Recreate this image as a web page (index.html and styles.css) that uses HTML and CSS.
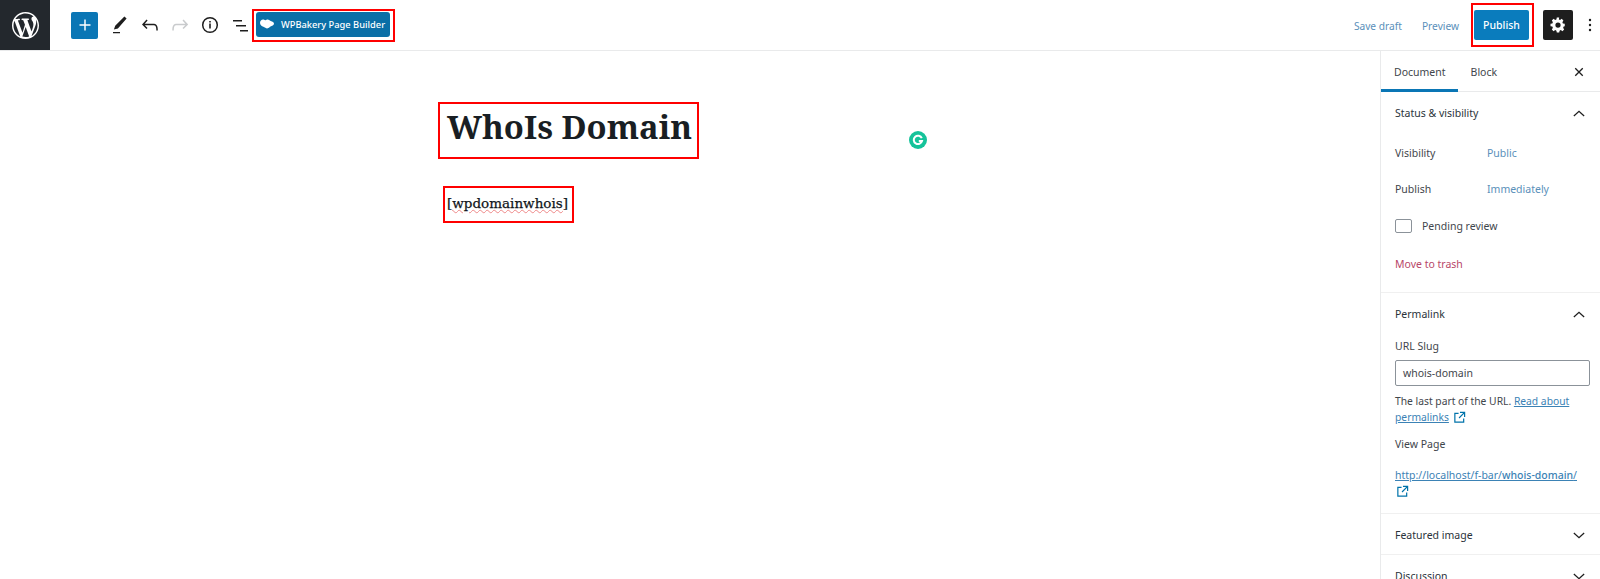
FILE: index.html
```html
<!DOCTYPE html>
<html lang="en">
<head>
<meta charset="utf-8">
<title>WhoIs Domain</title>
<link rel="stylesheet" href="styles.css">
</head>
<body>
<header class="topbar">
  <div class="wp-logo">
    <svg viewBox="0 0 20 20" width="27" height="27"><path fill="#fff" d="M20 10c0-5.510-4.490-10-10-10C4.480 0 0 4.490 0 10c0 5.520 4.480 10 10 10 5.510 0 10-4.480 10-10zM7.780 15.370L4.370 6.220c.55-.02 1.170-.08 1.170-.08.5-.06.44-1.130-.06-1.110 0 0-1.450.11-2.370.11-.18 0-.37 0-.58-.01C4.120 2.690 6.890 1.030 10 1.030c2.330 0 4.450.87 6.050 2.340-.68-.11-1.650.39-1.650 1.580 0 .74.45 1.360.9 2.100.35.61.55 1.360.55 2.460 0 1.490-1.400 5-1.400 5l-3.030-8.370c.54-.02.82-.17.82-.17.5-.05.44-1.250-.06-1.220 0 0-1.440.12-2.380.12-.87 0-2.330-.12-2.330-.12-.5-.03-.56 1.200-.06 1.220l.92.08 1.260 3.410zM17.410 10c.24-.64.74-1.870.43-4.250.7 1.290 1.050 2.710 1.050 4.250 0 3.290-1.730 6.240-4.400 7.780.97-2.590 1.940-5.200 2.920-7.780zM6.100 18.090C3.120 16.650 1.110 13.530 1.110 10c0-1.300.23-2.480.72-3.580zm4.030-6.960l2.580 6.980c-.86.29-1.730.46-2.710.46-.78 0-1.580-.12-2.320-.36z"/></svg>
  </div>
  <div class="tools">
    <button class="add" type="button" aria-label="Add block">
      <svg viewBox="0 0 24 24" width="22" height="22"><path fill="#fff" d="M18 11.200h-5.200V6h-1.600v5.200H6v1.600h5.200V18h1.600v-5.200H18z"/></svg>
    </button>
    <svg class="pen" viewBox="0 0 24 24" width="24" height="24"><path fill="#1e1e1e" d="M18.600 5.600L16.400 3.500 7.200 12.700l-1.300 3.900 4-1.200L18.600 5.600zM5 20.300h7v-1.400H5v1.400z"/></svg>
    <svg class="undo" viewBox="0 0 24 24" width="24" height="24"><path fill="#1e1e1e" d="M18.300 11.700c-.6-.6-1.400-.9-2.300-.9H6.700l2.900-3.300-1.100-1-4.500 5L8.500 16l1-1-2.700-2.700H16c.5 0 .9.200 1.300.5 1 1 1 3.400 1 4.500v.3h1.500v-.200c0-1.500 0-4.300-1.500-5.700z"/></svg>
    <svg class="redo" viewBox="0 0 24 24" width="24" height="24"><path fill="#c9cbcd" d="M15.600 6.500l-1.100 1 2.900 3.300H8c-.9 0-1.700.3-2.300.9-1.400 1.500-1.400 4.200-1.400 5.600v.2h1.500v-.3c0-1.100 0-3.500 1-4.500.3-.3.700-.5 1.300-.5h9.200L14.500 15l1.100 1.100 4.600-4.600-4.600-5z"/></svg>
    <svg class="info" viewBox="0 0 24 24" width="24" height="24"><circle cx="12" cy="12" r="7.300" fill="none" stroke="#1e1e1e" stroke-width="1.500"/><path fill="#1e1e1e" d="M11.200 10.500h1.600v5h-1.600zM11.200 8h1.600v1.600h-1.600z"/></svg>
    <svg class="outline" viewBox="0 0 24 24" width="24" height="24"><path fill="#1e1e1e" d="M4 7h9v1.500H4zM7 12h10v1.500H7zM11 17h8v1.500h-8z"/></svg>
    <div class="mark mark-builder">
      <a class="builder" href="#">
        <svg viewBox="0 0 14 10" width="14" height="10"><path fill="#fff" d="M0 4C0 1.800 1.500.4 3 .4c1 0 1.500.6 2.200.8C6 1.400 6.700.6 7.800.6c1 0 1.500.8 2.400 1.200C11.500 2.300 14 2.700 14 4.600c0 1.900-2.200 2.300-3.500 3-1 .6-1.800 1.800-3.300 1.800-1.500 0-2.200-1-3.200-1.400C2.500 7.500 0 6.500 0 4z"/></svg>
        <span>WPBakery Page Builder</span>
      </a>
    </div>
  </div>
  <div class="actions">
    <a class="link save" href="#">Save draft</a>
    <a class="link preview" href="#">Preview</a>
    <div class="mark mark-publish"><button class="publish" type="button">Publish</button></div>
    <button class="gear" type="button" aria-label="Settings">
      <svg viewBox="0 0 24 24" width="18" height="18"><path fill="#fff" fill-rule="evenodd" d="M21 13.600v-3.200l-2.500-.5c-.2-.6-.4-1.200-.7-1.700l1.400-2.100-2.300-2.300-2.100 1.400c-.5-.3-1.100-.5-1.700-.7L13.600 2h-3.200l-.5 2.500c-.6.2-1.200.4-1.700.7L6.100 3.800 3.800 6.100l1.400 2.100c-.3.5-.5 1.100-.7 1.700L2 10.400v3.200l2.500.5c.2.600.4 1.200.7 1.700l-1.400 2.100 2.300 2.300 2.100-1.400c.5.3 1.100.5 1.700.7l.5 2.500h3.200l.5-2.500c.6-.2 1.200-.4 1.700-.7l2.100 1.400 2.300-2.300-1.400-2.100c.3-.5.5-1.100.7-1.700zM12 15.500a3.500 3.500 0 1 1 0-7 3.500 3.500 0 0 1 0 7z"/></svg>
    </button>
    <svg class="dots" viewBox="0 0 4 16" width="4" height="16"><circle cx="2" cy="3" r="1.200" fill="#1e1e1e"/><circle cx="2" cy="8" r="1.200" fill="#1e1e1e"/><circle cx="2" cy="13" r="1.200" fill="#1e1e1e"/></svg>
  </div>
</header>
<div class="main">
  <main class="editor">
    <div class="column">
      <h1 class="post-title">WhoIs Domain</h1>
      <p class="shortcode"><span class="squiggle">[wpdomainwhois]</span></p>
    </div>
    <span class="grammarly"><svg viewBox="0 0 18 18" width="18" height="18"><circle cx="9" cy="9" r="9" fill="#15c39a"/><path fill="none" stroke="#fff" stroke-width="2" d="M12.800 7.200A4.200 4.200 0 1 0 13 10H9.800"/></svg></span>
  </main>
  <aside class="sidebar">
    <div class="tabs">
      <span class="tab active">Document</span>
      <span class="tab">Block</span>
      <svg class="close" viewBox="0 0 12 12" width="10" height="10"><path stroke="#1e1e1e" stroke-width="1.600" d="M1.500 1.500l9 9M10.500 1.500l-9 9"/></svg>
    </div>
    <section class="panel status">
      <div class="panel-head"><span>Status &amp; visibility</span><svg class="chev" viewBox="0 0 14 8" width="12" height="7"><path fill="none" stroke="#1e1e1e" stroke-width="1.500" d="M1 7l6-5.500L13 7"/></svg></div>
      <div class="row row-vis"><span class="row-label">Visibility</span><a class="link" href="#">Public</a></div>
      <div class="row row-pub"><span class="row-label">Publish</span><a class="link" href="#">Immediately</a></div>
      <label class="pending"><span class="check"></span><span>Pending review</span></label>
      <a class="trash" href="#">Move to trash</a>
    </section>
    <section class="panel permalink">
      <div class="panel-head"><span>Permalink</span><svg class="chev" viewBox="0 0 14 8" width="12" height="7"><path fill="none" stroke="#1e1e1e" stroke-width="1.500" d="M1 7l6-5.500L13 7"/></svg></div>
      <div class="slug-label">URL Slug</div>
      <div class="slug-input">whois-domain</div>
      <p class="help">The last part of the URL. <a href="#">Read about permalinks</a> <svg class="ext" viewBox="0 0 14 14" width="13" height="13"><path fill="none" stroke="#0073aa" stroke-width="1.300" d="M6 2.500H2v9.500h9.500V8M7.500 1.500h5v5M12.500 1.500L6.500 7.500"/></svg></p>
      <div class="view-label">View Page</div>
      <p class="view-link"><a href="#">http://localhost/f-bar/<b>whois-domain</b>/</a> <svg class="ext" viewBox="0 0 14 14" width="13" height="13"><path fill="none" stroke="#0073aa" stroke-width="1.300" d="M6 2.500H2v9.500h9.500V8M7.500 1.500h5v5M12.500 1.500L6.500 7.500"/></svg></p>
    </section>
    <section class="panel closed">
      <div class="panel-head"><span>Featured image</span><svg class="chev" viewBox="0 0 14 8" width="12" height="7"><path fill="none" stroke="#1e1e1e" stroke-width="1.500" d="M1 1l6 5.500L13 1"/></svg></div>
    </section>
    <section class="panel closed">
      <div class="panel-head"><span>Discussion</span><svg class="chev" viewBox="0 0 14 8" width="12" height="7"><path fill="none" stroke="#1e1e1e" stroke-width="1.500" d="M1 1l6 5.500L13 1"/></svg></div>
    </section>
  </aside>
</div>
</body>
</html>
```

FILE: styles.css
```css
* { box-sizing: border-box; }
html, body { margin: 0; height: 100%; overflow: hidden; background: #fff; }
body { font-family: "Noto Sans", "Open Sans", sans-serif; font-size: 10.5px; color: #3f464c; }
a { text-decoration: none; }
button { border: 0; padding: 0; font: inherit; }
svg { display: block; flex: none; }

.topbar { height: 51px; display: flex; align-items: center; border-bottom: 1px solid #e9eaeb; }
.wp-logo { width: 50px; height: 50px; background: #23282d; display: flex; align-items: center; justify-content: center; }
.tools { display: flex; align-items: center; margin-left: 21px; }
.add { width: 27px; height: 27px; background: #0a76b5; border-radius: 2px; display: flex; align-items: center; justify-content: center; }
.pen { margin-left: 10px; }
.undo { margin-left: 6px; }
.redo { margin-left: 6px; }
.info { margin-left: 6px; }
.outline { margin-left: 7px; }

.mark { border: 2px solid #f00; }
.mark-builder { margin-left: -1px; width: 143px; height: 33px; padding: 1px 2px; }
.builder { height: 25px; width: 134px; background: #0a6fa7; border-radius: 3px; color: #fff; display: flex; align-items: center; padding-left: 4px; font-size: 9.3px; font-weight: 500; }
.builder span { margin-left: 7px; white-space: nowrap; }

.actions { margin-left: auto; display: flex; align-items: center; padding-right: 8px; }
.link { color: #5a90ba; }
.save { margin-right: 20px; font-size: 10.2px; padding-top: 1px; }
.preview { margin-right: 12px; font-size: 10.2px; padding-top: 1px; }
.mark-publish { width: 63px; height: 44px; padding: 5px 1px; }
.publish { width: 55px; height: 30px; background: #0a7cbd; color: #fff; border-radius: 2px; font-weight: 500; display: block; }
.gear { width: 30px; height: 30px; margin-left: 9px; background: #1e1e1e; border-radius: 2px; display: flex; align-items: center; justify-content: center; }
.dots { margin-left: 15px; }

.main { display: flex; height: 528px; }
.editor { flex: 1; position: relative; }
.column { padding: 51px 0 0 438px; }
.post-title { margin: 0; width: 261px; height: 57px; border: 2px solid #f00; padding-left: 7px; font-family: "Noto Serif", "DejaVu Serif", serif; font-size: 32.8px; font-weight: 700; line-height: 45px; color: #191e23; white-space: nowrap; }
.shortcode { margin: 27px 0 0 5px; width: 131px; height: 37px; border: 2px solid #f00; padding-left: 2px; font-family: "DejaVu Serif", serif; font-size: 13.5px; line-height: 31px; color: #10151a; white-space: nowrap; -webkit-text-stroke: 0.25px #10151a; }
.squiggle { text-decoration: underline wavy #e88; text-decoration-thickness: 1px; -webkit-text-stroke: 0.25px #10151a; }
.grammarly { position: absolute; left: 909px; top: 80px; }

.sidebar { width: 220px; flex: none; border-left: 1px solid #e9eaeb; }
.tabs { height: 41px; display: flex; align-items: center; border-bottom: 1px solid #e9eaeb; position: relative; padding: 1px 0 0 13px; }
.tab { margin-right: 25px; }
.tab.active::after { content: ""; position: absolute; left: 0; bottom: -1px; width: 77px; height: 3px; background: #0a76b5; }
.close { margin-left: auto; margin-right: 16px; }
.panel { padding: 0 10px 0 14px; border-bottom: 1px solid #f0f0f0; }
.panel-head { display: flex; justify-content: space-between; align-items: center; height: 42px; color: #2a333a; }
.status .panel-head { height: 42px; margin-bottom: 0; }
.chev { margin-right: 5px; }
.status { height: 201px; }
.row { display: flex; height: 37px; align-items: center; }
.row-pub { height: 36px; }
.row-label { width: 92px; }
.pending { display: flex; align-items: center; gap: 10px; height: 37px; }
.check { width: 17px; height: 14px; border: 1px solid #8b9299; border-radius: 2px; display: block; }
.trash { display: block; margin-top: 13px; color: #b8476a; }
.permalink { height: 221px; }
.slug-label { margin-top: 4px; line-height: 15px; }
.slug-input { margin-top: 6px; height: 26px; border: 1px solid #8b9299; border-radius: 2px; padding-left: 7px; line-height: 24px; }
.help { margin: 7px 0 0; line-height: 16px; font-size: 10.3px; }
.help a, .view-link a { color: #3b82b5; text-decoration: underline; }
.help .ext, .view-link .ext { display: inline-block; vertical-align: -3px; margin-left: 1px; }
.view-label { margin-top: 11px; line-height: 16px; }
.view-link { margin: 15px 0 0; line-height: 16px; }
.view-link b { font-weight: 500; }
.closed { height: 41px; }
```
